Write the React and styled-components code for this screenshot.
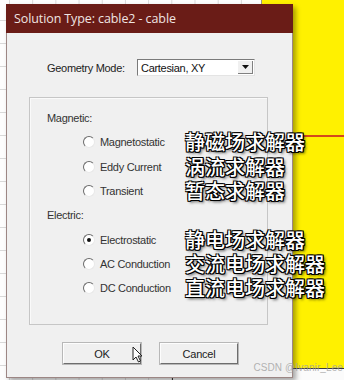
import React from 'react'
import styled, { createGlobalStyle } from 'styled-components'

const GlobalStyle = createGlobalStyle`
  html, body {
    margin: 0;
    padding: 0;
    width: 344px;
    height: 380px;
    overflow: hidden;
  }
`

const Desktop = styled.div`
  position: relative;
  width: 344px;
  height: 380px;
  overflow: hidden;
  background-color: #fdfdfd;
  background-image:
    linear-gradient(to right, #d9d9d9 1px, transparent 1px),
    linear-gradient(to bottom, #d9d9d9 1px, transparent 1px);
  background-size: 23.2px 23px;
  background-position: 9px -3px;
  font-family: "Liberation Sans", Arial, sans-serif;
`

const YellowShape = styled.div`
  position: absolute;
  left: 261px;
  top: 0;
  right: 0;
  height: 368px;
  background: #fff100;
  border-left: 1px solid #9a9a80;
`

const WireLine = styled.div`
  position: absolute;
  left: 0;
  right: 0;
  top: 135px;
  height: 2px;
  background: #d4481c;
`

const LowerBox = styled.div`
  position: absolute;
  left: 172px;
  top: 368px;
  right: -2px;
  bottom: -2px;
  border-top: 1.5px solid #3a3a3a;
  border-left: 1.5px solid #3a3a3a;
  background: #fbfbfb;
`

const Watermark = styled.div`
  position: absolute;
  right: 1px;
  top: 362px;
  font-size: 10px;
  color: rgba(160, 160, 160, 0.8);
  letter-spacing: 0.1px;
`

const Dialog = styled.div`
  position: absolute;
  left: 6px;
  top: 4px;
  width: 285px;
  display: flex;
  flex-direction: column;
  border: 1px solid #9c8684;
  border-top: 0;
  background: #f0f0f0;
  box-shadow: 3px 3px 5px rgba(0, 0, 0, 0.35);
`

const TitleBar = styled.div`
  height: 29px;
  display: flex;
  align-items: center;
  padding-left: 8px;
  margin: 0 -1px;
  background: #6a1c17;
  color: #efe4e2;
  font-family: "Open Sans", "Noto Sans", sans-serif;
  font-size: 12.5px;
  letter-spacing: -0.1px;
`

const Body = styled.div`
  display: flex;
  flex-direction: column;
  padding: 26px 0 13px;
`

const GeometryRow = styled.div`
  display: flex;
  align-items: center;
  height: 17px;
  padding-left: 40px;
`

const FieldLabel = styled.span`
  width: 90px;
  font-size: 11px;
  letter-spacing: -0.3px;
  color: #222;
`

const Select = styled.div`
  width: 114px;
  height: 13px;
  display: flex;
  align-items: center;
  justify-content: space-between;
  padding: 1px;
  background: #fff;
  border-top: 1px solid #7a7a7a;
  border-left: 1px solid #7a7a7a;
  border-bottom: 1px solid #e4e4e4;
  border-right: 1px solid #e4e4e4;
  font-size: 11px;
  letter-spacing: -0.3px;
  color: #111;
  span { padding-left: 2px; }
`

const ArrowButton = styled.div`
  width: 15px;
  height: 13px;
  display: flex;
  align-items: center;
  justify-content: center;
  background: #f0f0f0;
  border-right: 1px solid #808080;
  border-bottom: 1px solid #808080;
  box-sizing: border-box;
`

const GroupBox = styled.div`
  margin: 21px 0 0 22px;
  width: 237px;
  height: 208px;
  padding: 8px 0 10px;
  border: 1px solid #c6c6c6;
  box-shadow: inset 1px 1px 0 #fafafa;
`

const SectionLabel = styled.div`
  height: 24.3px;
  line-height: 24.3px;
  padding-left: 17px;
  font-size: 11px;
  letter-spacing: -0.3px;
  color: #333;
`

const OptionRow = styled.div`
  display: flex;
  align-items: center;
  height: 24.3px;
  padding-left: 53px;
  & > * { flex-shrink: 0; }
`

const Radio = styled.span`
  box-sizing: border-box;
  width: 12px;
  height: 12px;
  border-radius: 50%;
  background: #fff;
  border: 1px solid;
  border-color: #6a6a6a #e8e8e8 #e8e8e8 #6a6a6a;
  display: flex;
  align-items: center;
  justify-content: center;
  &::after {
    content: '';
    width: 4px;
    height: 4px;
    border-radius: 50%;
    background: ${p => (p.$checked ? '#111' : 'transparent')};
  }
`

const OptionLabel = styled.span`
  width: 85px;
  padding-left: 5px;
  font-size: 11px;
  letter-spacing: -0.3px;
  color: #333;
  white-space: nowrap;
`

const Note = styled.span`
  font-family: "Noto Sans CJK SC", "Noto Sans", sans-serif;
  font-size: 20px;
  font-weight: 500;
  line-height: 24px;
  color: #fff;
  white-space: nowrap;
  text-shadow:
    -1px -1px 0 #000, 1px -1px 0 #000, -1px 1px 0 #000, 1px 1px 0 #000,
    0 1px 0 #000, 1px 0 0 #000, 2px 2px 3px rgba(0, 0, 0, 0.7);
`

const ButtonRow = styled.div`
  display: flex;
  justify-content: center;
  gap: 19px;
  margin-top: 18px;
  padding-left: 2px;
`

const Button = styled.div`
  position: relative;
  box-sizing: border-box;
  width: 78px;
  height: 21px;
  display: flex;
  align-items: center;
  justify-content: center;
  font-size: 11px;
  letter-spacing: -0.2px;
  color: #222;
  background: #f0f0f0;
  border: 1px solid;
  border-color: #fdfdfd #6d6d6d #6d6d6d #fdfdfd;
  box-shadow: 0 0 0 1px #b8b8b8;
`

const Cursor = styled.svg`
  position: absolute;
  left: 68px;
  top: 2px;
`

const magnetic = [
  { label: 'Magnetostatic', note: '静磁场求解器' },
  { label: 'Eddy Current', note: '涡流求解器' },
  { label: 'Transient', note: '暂态求解器' },
]

const electric = [
  { label: 'Electrostatic', note: '静电场求解器', checked: true },
  { label: 'AC Conduction', note: '交流电场求解器' },
  { label: 'DC Conduction', note: '直流电场求解器' },
]

function Option({ label, note, checked }) {
  return (
    <OptionRow>
      <Radio $checked={checked} />
      <OptionLabel>{label}</OptionLabel>
      <Note>{note}</Note>
    </OptionRow>
  )
}

export default function App() {
  return (
    <>
      <GlobalStyle />
      <Desktop>
        <YellowShape>
          <WireLine />
        </YellowShape>
        <LowerBox />

        <Dialog>
          <TitleBar>Solution Type: cable2 - cable</TitleBar>
          <Body>
            <GeometryRow>
              <FieldLabel>Geometry Mode:</FieldLabel>
              <Select>
                <span>Cartesian, XY</span>
                <ArrowButton>
                  <svg width="7" height="4" viewBox="0 0 7 4">
                    <path d="M0 0h7L3.5 4z" fill="#111" />
                  </svg>
                </ArrowButton>
              </Select>
            </GeometryRow>

            <GroupBox>
              <SectionLabel>Magnetic:</SectionLabel>
              {magnetic.map(o => <Option key={o.label} {...o} />)}
              <SectionLabel>Electric:</SectionLabel>
              {electric.map(o => <Option key={o.label} {...o} />)}
            </GroupBox>

            <ButtonRow>
              <Button>
                OK
                <Cursor width="11" height="17" viewBox="0 0 11 17">
                  <path d="M1 1v13l3-3 2.5 5 2-1-2.5-5H10z" fill="#fff" stroke="#222" strokeWidth="1" strokeLinejoin="round" />
                </Cursor>
              </Button>
              <Button>Cancel</Button>
            </ButtonRow>
          </Body>
        </Dialog>

        <Watermark>CSDN @Ivanir_Lee</Watermark>
      </Desktop>
    </>
  )
}
